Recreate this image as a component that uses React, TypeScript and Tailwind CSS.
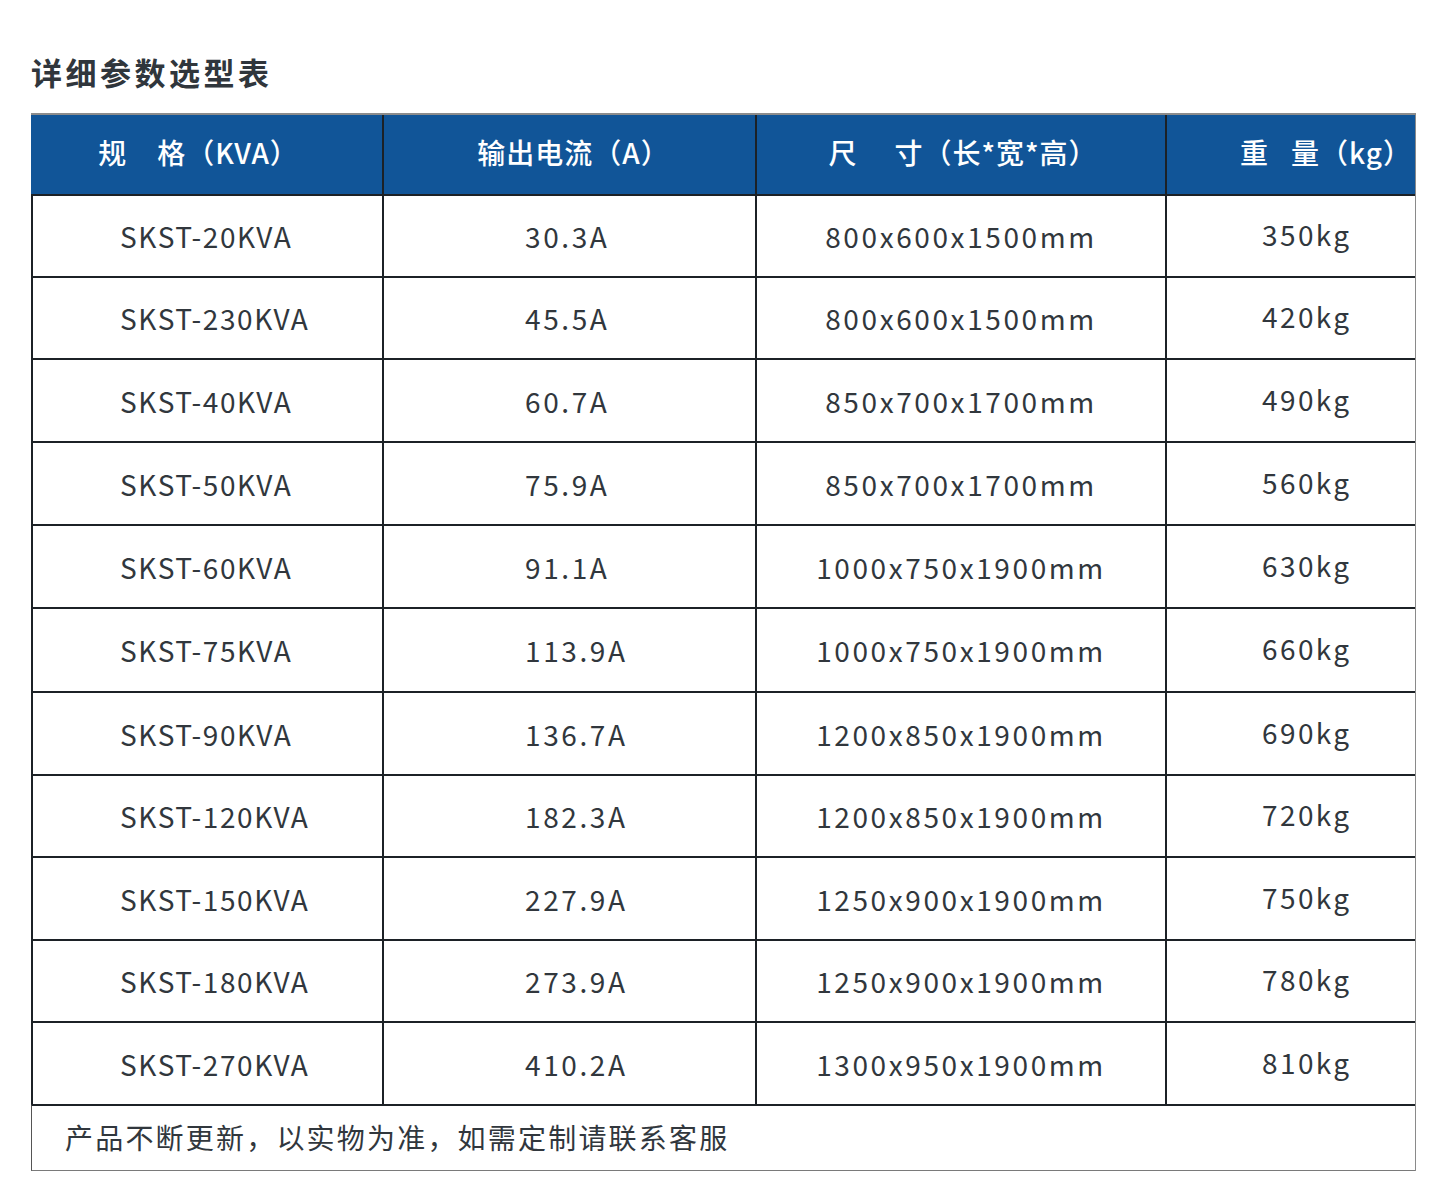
const rows = [
  { spec: "SKST-20KVA", current: "30.3A", size: "800x600x1500mm", weight: "350kg", h: "h-[82px]" },
  { spec: "SKST-230KVA", current: "45.5A", size: "800x600x1500mm", weight: "420kg", h: "h-[82px]" },
  { spec: "SKST-40KVA", current: "60.7A", size: "850x700x1700mm", weight: "490kg", h: "h-[83px]" },
  { spec: "SKST-50KVA", current: "75.9A", size: "850x700x1700mm", weight: "560kg", h: "h-[83px]" },
  { spec: "SKST-60KVA", current: "91.1A", size: "1000x750x1900mm", weight: "630kg", h: "h-[83px]" },
  { spec: "SKST-75KVA", current: "113.9A", size: "1000x750x1900mm", weight: "660kg", h: "h-[84px]" },
  { spec: "SKST-90KVA", current: "136.7A", size: "1200x850x1900mm", weight: "690kg", h: "h-[83px]" },
  { spec: "SKST-120KVA", current: "182.3A", size: "1200x850x1900mm", weight: "720kg", h: "h-[82px]" },
  { spec: "SKST-150KVA", current: "227.9A", size: "1250x900x1900mm", weight: "750kg", h: "h-[83px]" },
  { spec: "SKST-180KVA", current: "273.9A", size: "1250x900x1900mm", weight: "780kg", h: "h-[82px]" },
  { spec: "SKST-270KVA", current: "410.2A", size: "1300x950x1900mm", weight: "810kg", h: "h-[83px]" },
];

const font = "font-['Noto_Sans_CJK_SC','Noto_Sans',sans-serif]";

export default function App() {
  return (
    <div className={`min-h-[1201px] w-[1445px] bg-white px-[31px] pt-[48px] ${font}`}>
      <h1 className="text-[31px] font-bold leading-[48px] tracking-[3.5px] text-[#30363c]">
        详细参数选型表
      </h1>

      <div className="mt-[17px] w-[1385px] border-r border-[#8a8a8a]">
        {/* header */}
        <div className="flex h-[81px] border-t-2 border-[#8c8c8c] bg-[#115598] text-[28px] font-medium tracking-[1px] text-white">
          <div className="flex w-[353px] items-center justify-center border-r-2 border-[#1c2126] pb-[6px] pr-[16px]">
            规<span className="inline-block w-[30px]" />格（KVA）
          </div>
          <div className="flex w-[373px] items-center justify-center border-r-2 border-[#1c2126] pb-[6px] pl-[8px]">
            输出电流（A）
          </div>
          <div className="flex w-[410px] items-center justify-center border-r-2 border-[#1c2126] pb-[6px] pl-[4px]">
            尺<span className="inline-block w-[37px]" />寸（长*宽*高）
          </div>
          <div className="flex flex-1 items-center justify-center pb-[6px] pl-[70px]">
            重<span className="inline-block w-[22px]" />量（kg）
          </div>
        </div>

        {/* body */}
        <div className="border-l-2 border-[#1c2126] text-[28px] text-[#31373d]">
          {rows.map(r => (
            <div className={`flex border-t-2 border-[#1c2126] ${r.h}`} key={r.spec}>
              <div className="flex w-[351px] items-center border-r-2 border-[#1c2126] pl-[87px] tracking-[1.6px]">
                {r.spec}
              </div>
              <div className="flex w-[373px] items-center border-r-2 border-[#1c2126] pl-[141px] tracking-[2.6px]">
                {r.current}
              </div>
              <div className="flex w-[410px] items-center justify-center border-r-2 border-[#1c2126] tracking-[2.6px]">
                {r.size}
              </div>
              <div className="flex flex-1 items-center pb-[4px] pl-[95px] tracking-[2.4px]">
                {r.weight}
              </div>
            </div>
          ))}
        </div>

        {/* footer */}
        <div className="flex h-[67px] items-center border-t-2 border-b border-l border-t-[#1c2126] border-b-[#7a7a7a] border-l-[#555] pb-[3px] pl-[33px] text-[28px] tracking-[2.2px] text-[#31373d]">
          产品不断更新，以实物为准，如需定制请联系客服
        </div>
      </div>
    </div>
  );
}
